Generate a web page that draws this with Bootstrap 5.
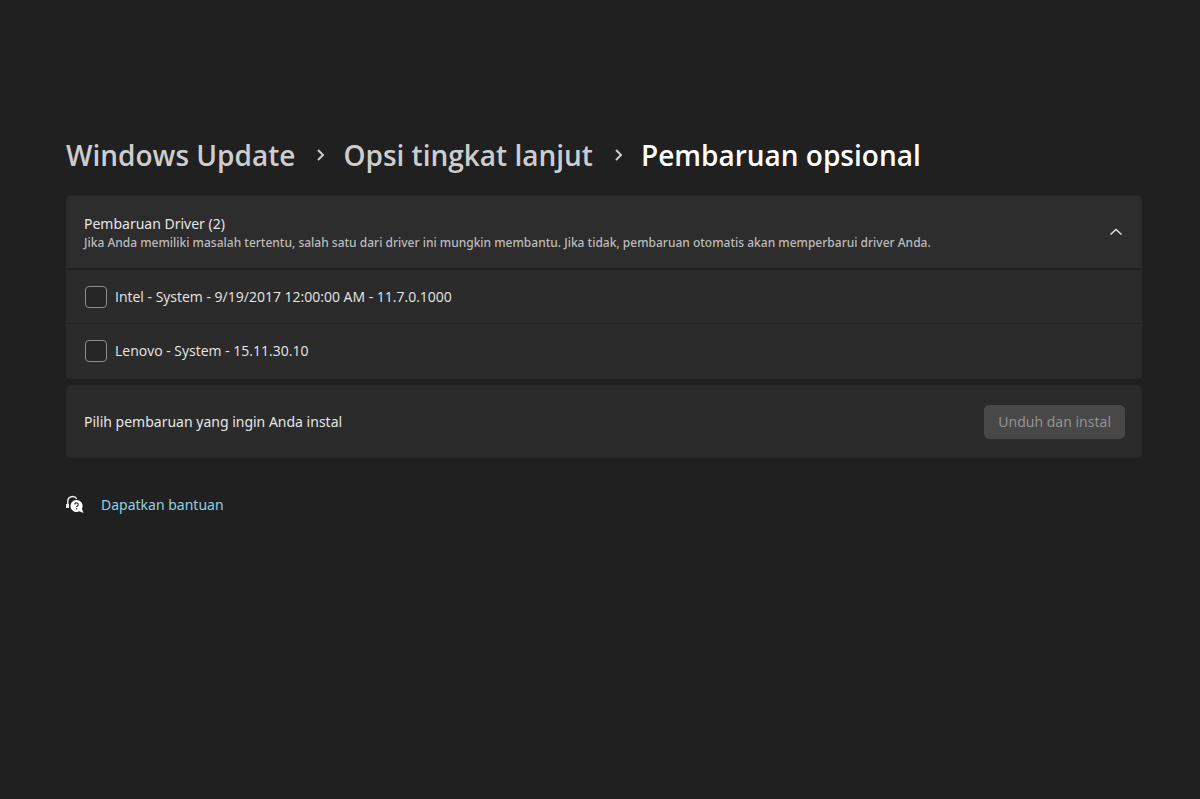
<!DOCTYPE html>
<html lang="id" data-bs-theme="dark">
<head>
<meta charset="utf-8">
<meta name="viewport" content="width=device-width, initial-scale=1">
<title>Pembaruan opsional</title>
<link rel="stylesheet" href="https://cdn.jsdelivr.net/npm/bootstrap@5.3.0/dist/css/bootstrap.min.css">
<style>
  body { background: #202020; color: #e6e6e6; font: 14px/20px "Noto Sans", "Open Sans", sans-serif; }
  .settings-page { padding: 133px 58px 40px 66px; }
  .trail { font-family: "Open Sans", "Noto Sans", sans-serif; font-size: 28px; line-height: 44px; font-weight: 600; margin-bottom: 18px; gap: 18px; }
  .trail a { color: #cdcdcd; }
  .trail .current { color: #fff; }
  .panel { background: #2b2b2b; border: 1px solid #282828; border-radius: 4px; }
  .panel-head { background: #2d2d2d; min-height: 72px; padding: 0 18px 0 17px; border-radius: 4px 4px 0 0; color: inherit; font-size: 14px; }
  .panel-head .note { font-size: 12px; line-height: 18px; font-weight: 500; color: #bcbcbc; }
  .driver-row { background: #2b2b2b; height: 55px; padding: 0 18px; border-top: 1px solid #222; gap: 8px; font-family: "Open Sans", "Noto Sans", sans-serif; }
  .driver-row.first { border-top: 2px solid #1f1f1f; }
  .driver-row .form-check-input { width: 22px; height: 22px; margin: 0; border: 1px solid #8c8c8c; border-radius: 4px; background-color: #262626; flex: none; }
  .install-bar { margin-top: 6px; min-height: 73px; padding: 0 16px 0 17px; }
  .install-bar .btn { --bs-btn-disabled-bg: #484848; --bs-btn-disabled-color: #929292; --bs-btn-disabled-border-color: #484848; --bs-btn-disabled-opacity: 1; font-size: 14px; line-height: 20px; padding: 6px 13px; border-radius: 5px; }
  .help { margin-top: 37px; gap: 17px; }
  .help a { color: #8fd0e0; }
</style>
</head>
<body>
<main class="settings-page">
  <nav aria-label="Jejak navigasi">
    <h1 class="trail d-flex align-items-center">
      <a href="#" class="text-decoration-none">Windows Update</a>
      <svg width="12" height="14" viewBox="0 0 12 14" fill="none" stroke="#cdcdcd" stroke-width="2" aria-hidden="true"><path d="M5 2l5 5-5 5"/></svg>
      <a href="#" class="text-decoration-none">Opsi tingkat lanjut</a>
      <svg width="12" height="14" viewBox="0 0 12 14" fill="none" stroke="#cdcdcd" stroke-width="2" aria-hidden="true"><path d="M5 2l5 5-5 5"/></svg>
      <span class="current">Pembaruan opsional</span>
    </h1>
  </nav>

  <section class="panel">
    <button type="button" class="panel-head btn border-0 w-100 d-flex align-items-center justify-content-between text-start" data-bs-toggle="collapse" data-bs-target="#drivers" aria-expanded="true" aria-controls="drivers">
      <span>
        <span class="d-block">Pembaruan Driver (2)</span>
        <span class="d-block note">Jika Anda memiliki masalah tertentu, salah satu dari driver ini mungkin membantu. Jika tidak, pembaruan otomatis akan memperbarui driver Anda.</span>
      </span>
      <svg width="14" height="10" viewBox="0 0 14 10" fill="none" stroke="#dcdcdc" stroke-width="1.6" aria-hidden="true"><path d="M1.500 7.500L7 2.500l5.500 5"/></svg>
    </button>
    <div id="drivers" class="collapse show">
      <div class="driver-row first d-flex align-items-center">
        <input class="form-check-input" type="checkbox" id="intel">
        <label for="intel">Intel - System - 9/19/2017 12:00:00 AM - 11.7.0.1000</label>
      </div>
      <div class="driver-row d-flex align-items-center">
        <input class="form-check-input" type="checkbox" id="lenovo">
        <label for="lenovo">Lenovo - System - 15.11.30.10</label>
      </div>
    </div>
  </section>

  <section class="panel install-bar d-flex align-items-center justify-content-between">
    <span>Pilih pembaruan yang ingin Anda instal</span>
    <button type="button" class="btn" disabled>Unduh dan instal</button>
  </section>

  <div class="help d-flex align-items-center">
    <svg width="18" height="20" viewBox="0 0 18 20" aria-hidden="true">
      <path d="M1.800 9V6.500a4.800 4.800 0 0 1 9-2.500" fill="none" stroke="#e8e8e8" stroke-width="1.500"/>
      <path d="M0 9h3v4H0z" fill="#e8e8e8"/>
      <path d="M10.500 5a6 6 0 1 0 2.800 11.300L17.500 18l-1.600-4.200A6 6 0 0 0 10.500 5z" fill="#fff"/>
      <path d="M8.800 9.600a1.700 1.700 0 1 1 2.600 1.400c-.7.400-.9.700-.9 1.300M10.500 13.300v1.200" fill="none" stroke="#333" stroke-width="1.200"/>
    </svg>
    <a href="#" class="text-decoration-none">Dapatkan bantuan</a>
  </div>
</main>
<script src="https://cdn.jsdelivr.net/npm/bootstrap@5.3.0/dist/js/bootstrap.bundle.min.js"></script>
</body>
</html>
